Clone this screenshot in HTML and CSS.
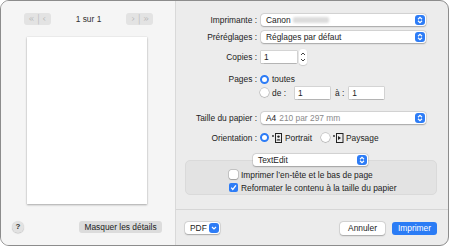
FILE: index.html
```html
<!DOCTYPE html>
<html lang="fr">
<head>
    <meta charset="UTF-8">
    <title>Imprimer</title>
    <link rel="stylesheet" href="styles.css">
</head>
<body>

    <div class="window">

        <div class="preview">
            <div class="pager">
                <span class="nav-btn">&laquo; | &lsaquo;</span>
                <span class="page-count">1 sur 1</span>
                <span class="nav-btn">&rsaquo; | &raquo;</span>
            </div>
            <div class="sheet"></div>
            <div class="preview-footer">
                <span class="help">?</span>
                <span class="gray-btn">Masquer les détails</span>
            </div>
        </div>

        <div class="details">
            <div class="settings">
                <div class="row r-printer">
                    <span class="lbl">Imprimante :</span>
                    <div class="popup">
                        <span>Canon</span><span class="redacted"></span>
                        <span class="knob">
                            <svg width="10" height="10" viewBox="0 0 10 10"><path d="M3 4.2 5 2.4 7 4.2M3 5.8 5 7.6 7 5.8" fill="none" stroke="#fff" stroke-width="1.2"/></svg>
                        </span>
                    </div>
                </div>
                <div class="row r-presets">
                    <span class="lbl">Préréglages :</span>
                    <div class="popup">
                        <span>Réglages par défaut</span>
                        <span class="knob">
                            <svg width="10" height="10" viewBox="0 0 10 10"><path d="M3 4.2 5 2.4 7 4.2M3 5.8 5 7.6 7 5.8" fill="none" stroke="#fff" stroke-width="1.2"/></svg>
                        </span>
                    </div>
                </div>
                <div class="row r-copies">
                    <span class="lbl">Copies :</span>
                    <span class="field copies">1</span>
                    <span class="stepper">
                        <svg width="8" height="16" viewBox="0 0 8 16"><path d="M2 6 4 4 6 6M2 10 4 12 6 10" fill="none" stroke="#444" stroke-width="1"/></svg>
                    </span>
                </div>
                <div class="row r-pages">
                    <span class="lbl">Pages :</span>
                    <span class="radio on"></span>
                    <span class="opt">toutes</span>
                </div>
                <div class="row r-range">
                    <span class="lbl"></span>
                    <span class="radio"></span>
                    <span class="opt">de :</span>
                    <span class="field range">1</span>
                    <span class="opt to">à :</span>
                    <span class="field range">1</span>
                </div>
                <div class="row r-paper">
                    <span class="lbl">Taille du papier :</span>
                    <div class="popup">
                        <span class="paper-name">A4</span><span class="dim">210 par 297 mm</span>
                        <span class="knob">
                            <svg width="10" height="10" viewBox="0 0 10 10"><path d="M3 4.2 5 2.4 7 4.2M3 5.8 5 7.6 7 5.8" fill="none" stroke="#fff" stroke-width="1.2"/></svg>
                        </span>
                    </div>
                </div>
                <div class="row r-orient">
                    <span class="lbl">Orientation :</span>
                    <span class="radio on"></span>
                    <svg class="orient-icon" width="11" height="10" viewBox="0 0 11 10">
                        <circle cx="1" cy="3" r="0.9" fill="#222"/>
                        <rect x="3.5" y="0.5" width="6" height="9" fill="none" stroke="#222" stroke-width="1"/>
                        <circle cx="6.5" cy="3.6" r="1.2" fill="#222"/>
                        <path d="M4.6 7.4c0-1.4 3.8-1.4 3.8 0z" fill="#222"/>
                    </svg>
                    <span class="opt">Portrait</span>
                    <span class="radio second"></span>
                    <svg class="orient-icon" width="11" height="10" viewBox="0 0 11 10">
                        <circle cx="1" cy="3" r="0.9" fill="#222"/>
                        <rect x="3.5" y="0.5" width="6.5" height="9" fill="none" stroke="#222" stroke-width="1"/>
                        <path d="M5 3v4l3-2z" fill="#222"/>
                    </svg>
                    <span class="opt">Paysage</span>
                </div>
            </div>

            <div class="app-options">
                <div class="popup app">
                    <span>TextEdit</span>
                    <span class="knob">
                        <svg width="10" height="10" viewBox="0 0 10 10"><path d="M3 4.2 5 2.4 7 4.2M3 5.8 5 7.6 7 5.8" fill="none" stroke="#fff" stroke-width="1.2"/></svg>
                    </span>
                </div>
                <div class="group-box">
                    <div class="check-row">
                        <span class="checkbox"></span>
                        <span>Imprimer l’en-tête et le bas de page</span>
                    </div>
                    <div class="check-row">
                        <span class="checkbox on">
                            <svg width="9" height="9" viewBox="0 0 9 9"><path d="M2.2 4.6 3.8 6.4 6.9 2.4" fill="none" stroke="#fff" stroke-width="1.3"/></svg>
                        </span>
                        <span>Reformater le contenu à la taille du papier</span>
                    </div>
                </div>
            </div>

            <div class="footer">
                <div class="popup pdf">
                    <span>PDF</span>
                    <span class="knob">
                        <svg width="10" height="10" viewBox="0 0 10 10"><path d="M3 4 5 6 7 4" fill="none" stroke="#fff" stroke-width="1.2"/></svg>
                    </span>
                </div>
                <span class="spacer"></span>
                <span class="btn">Annuler</span>
                <span class="btn primary">Imprimer</span>
            </div>
        </div>

    </div>

</body>
</html>
```

FILE: styles.css
```css
* {
    margin: 0;
    padding: 0;
    box-sizing: border-box;
}

body {
    background: #fff;
    font-family: "Liberation Sans", Arial, sans-serif;
    font-size: 8.4px;
    color: #1c1c1c;
}

.window {
    width: 449px;
    height: 246px;
    border: 1px solid #8c8c8c;
    border-radius: 9px;
    overflow: hidden;
    display: flex;
    background: #ececec;
}

/* left pane */

.preview {
    width: 175px;
    background: #f5f5f5;
    border-right: 1px solid #d9d9d9;
    display: flex;
    flex-direction: column;
    align-items: center;
}

.pager {
    margin-top: 12px;
    width: 130px;
    height: 12px;
    display: flex;
    align-items: center;
    justify-content: space-between;
    margin-left: 1px;
}

.nav-btn {
    width: 27px;
    height: 12px;
    border-radius: 3px;
    background: #e3e3e3;
    color: #b0b0b0;
    font-size: 10px;
    text-align: center;
    line-height: 11px;
    white-space: nowrap;
    font-family: "DejaVu Sans", sans-serif;
    font-weight: 300;
    letter-spacing: -0.5px;
}

.page-count {
    color: #333;
}

.sheet {
    margin-top: 12px;
    width: 120px;
    height: 167px;
    background: #fff;
    box-shadow: 0 1px 2px rgba(0, 0, 0, 0.3), 0 0 1px rgba(0, 0, 0, 0.15);
    margin-right: 2px;
}

.preview-footer {
    margin-top: 17px;
    width: 100%;
    padding: 0 13px 0 11px;
    display: flex;
    align-items: center;
    justify-content: space-between;
}

.help {
    width: 12px;
    height: 12px;
    border-radius: 50%;
    background: #e2e2e2;
    box-shadow: 0 0.5px 1px rgba(0, 0, 0, 0.25);
    font-size: 8px;
    font-weight: bold;
    text-align: center;
    line-height: 12px;
    color: #333;
}

.gray-btn {
    width: 83px;
    height: 12px;
    border-radius: 3px;
    background: #dcdcdc;
    text-align: center;
    line-height: 12px;
    color: #222;
}

/* right pane */

.details {
    flex: 1;
    display: flex;
    flex-direction: column;
}

.settings {
    padding-top: 12px;
}

.row {
    display: flex;
    align-items: center;
    height: 13px;
}

.lbl {
    width: 81px;
    margin-right: 4px;
    text-align: right;
    flex-shrink: 0;
}

.r-presets { margin-top: 4px; }
.r-copies { margin-top: 7px; }
.r-pages { margin-top: 10px; height: 12px; }
.r-range { margin-top: 1px; height: 13px; }
.r-paper { margin-top: 12px; }
.r-orient { margin-top: 7px; height: 13px; }

.popup {
    position: relative;
    width: 165px;
    height: 12px;
    background: #fff;
    border-radius: 3px;
    box-shadow: 0 0 0 0.5px rgba(0, 0, 0, 0.12), 0 0.5px 1.5px rgba(0, 0, 0, 0.25);
    display: flex;
    align-items: center;
    padding-left: 5px;
}

.knob {
    position: absolute;
    right: 1px;
    top: 1px;
    width: 10px;
    height: 10px;
    border-radius: 3px;
    background: #2d7cf6;
    display: flex;
}

.redacted {
    display: inline-block;
    width: 36px;
    height: 6px;
    margin-left: 2px;
    background: #dcdcdc;
    border-radius: 2px;
    filter: blur(1px);
}

.paper-name {
    margin-right: 3px;
}

.dim {
    color: #8a8a8a;
}

.field {
    height: 12px;
    background: #fff;
    box-shadow: 0 0 0 0.5px rgba(0, 0, 0, 0.2), 0 0.5px 1px rgba(0, 0, 0, 0.15);
    padding-left: 3px;
    line-height: 12px;
}

.copies {
    width: 36px;
}

.stepper {
    margin-left: 2px;
    width: 8px;
    height: 16px;
    border-radius: 3px;
    background: #fff;
    box-shadow: 0 0.5px 1px rgba(0, 0, 0, 0.25);
    display: flex;
}

.radio {
    width: 9px;
    height: 9px;
    border-radius: 50%;
    background: #fff;
    box-shadow: 0 0 0 0.5px rgba(0, 0, 0, 0.25), 0 0.5px 1px rgba(0, 0, 0, 0.2);
    margin-left: -1px;
    margin-right: 3px;
    flex-shrink: 0;
}

.radio.on {
    border: 2.5px solid #2d7cf6;
    box-shadow: none;
}

.radio.second {
    margin-left: 6px;
}

.opt {
    margin-right: 3px;
}

.range {
    width: 35px;
    margin-left: 6px;
}

.to {
    margin-left: 5px;
    margin-right: -1px;
}

.orient-icon {
    margin-right: 2px;
    flex-shrink: 0;
}

.app-options {
    margin-top: 10px;
    display: flex;
    flex-direction: column;
    align-items: center;
}

.popup.app {
    width: 115px;
    z-index: 1;
    margin-left: -3px;
}

.group-box {
    margin-top: -6px;
    width: 252px;
    height: 35px;
    margin-left: -2px;
    background: #e3e3e3;
    border: 1px solid #dadada;
    border-radius: 5px;
    padding: 7px 0 0 43px;
}

.check-row {
    height: 13px;
    display: flex;
    align-items: center;
}

.checkbox {
    width: 9px;
    height: 9px;
    border-radius: 2px;
    background: #fff;
    box-shadow: 0 0 0 0.5px rgba(0, 0, 0, 0.25), 0 0.5px 1px rgba(0, 0, 0, 0.2);
    margin-right: 3px;
    display: flex;
}

.checkbox.on {
    background: #2d7cf6;
    box-shadow: none;
}

.footer {
    margin-top: 14px;
    border-top: 1px solid #d6d6d6;
    flex: 1;
    display: flex;
    align-items: flex-start;
    padding: 12px 11px 0 9px;
    gap: 7px;
}

.popup.pdf {
    width: 35px;
}

.spacer {
    flex: 1;
}

.btn {
    width: 45px;
    height: 13px;
    border-radius: 3px;
    background: #fff;
    box-shadow: 0 0 0 0.5px rgba(0, 0, 0, 0.12), 0 0.5px 1.5px rgba(0, 0, 0, 0.25);
    text-align: center;
    line-height: 13px;
}

.btn.primary {
    background: #2b7cf5;
    color: #fff;
    box-shadow: none;
}
```
